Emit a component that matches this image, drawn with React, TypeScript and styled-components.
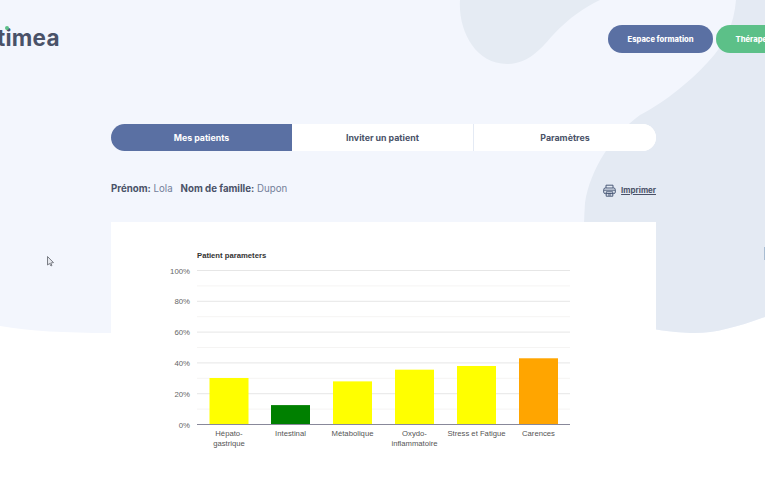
import React from "react";
import styled, { createGlobalStyle } from "styled-components";

const Global = createGlobalStyle`
  html, body { margin: 0; padding: 0; background: #fff; }
  #root { width: 765px; }
`;

const Page = styled.div`
  position: relative;
  width: 765px;
  height: 477px;
  overflow: hidden;
  font-family: Inter, "Liberation Sans", sans-serif;
  color: #4a5268;
`;

const Backdrop = styled.svg`
  position: absolute;
  inset: 0;
`;

const Content = styled.div`
  position: relative;
  display: flex;
  flex-direction: column;
`;

const Header = styled.header`
  display: flex;
  align-items: flex-start;
  justify-content: space-between;
  height: 124px;
  width: 765px;
`;

const Logo = styled.div`
  position: relative;
  margin: 24px 0 0 -3px;
  font-size: 22.5px;
  line-height: 27px;
  font-weight: 700;
  letter-spacing: 0.25px;
  color: #4a5268;
`;

const LogoDot = styled.span`
  position: absolute;
  left: 8px;
  top: 2px;
  width: 4px;
  height: 4px;
  border-radius: 50%;
  background: #5cc088;
`;

const Nav = styled.nav`
  display: flex;
  gap: 3px;
  margin: 25px 0 0 0;
  width: 157px;
  flex: none;
  overflow: hidden;
`;

const NavButton = styled.a<{ $bg: string }>`
  flex: none;
  height: 28px;
  padding: 0 19.5px;
  display: flex;
  align-items: center;
  justify-content: center;
  border-radius: 14px;
  background: ${(p) => p.$bg};
  color: #fff;
  font-size: 7.6px;
  font-weight: 800;
`;

const Tabs = styled.div`
  display: grid;
  grid-template-columns: 181px 181px 183px;
  width: 545px;
  height: 27px;
  margin-left: 111px;
  border-radius: 14px;
  overflow: hidden;
  background: #fff;
`;

const Tab = styled.div<{ $active?: boolean; $divider?: boolean }>`
  display: flex;
  align-items: center;
  justify-content: center;
  font-size: 8.8px;
  font-weight: 700;
  background: ${(p) => (p.$active ? "#5a70a3" : "#fff")};
  color: ${(p) => (p.$active ? "#fff" : "#4a5268")};
  border-left: ${(p) => (p.$divider ? "1px solid #e4eaf4" : "none")};
`;

const InfoRow = styled.div`
  display: flex;
  align-items: center;
  justify-content: space-between;
  width: 545px;
  height: 24px;
  margin: 25px 0 0 111px;
`;

const Identity = styled.div`
  display: flex;
  gap: 8px;
  font-size: 9.7px;
`;

const Field = styled.span`
  color: #73809a;
  font-weight: 400;
`;

const FieldLabel = styled.b`
  color: #4a5268;
  font-weight: 700;
`;

const PrintLink = styled.a`
  display: flex;
  align-items: center;
  gap: 5px;
  margin-top: 4px;
  font-size: 7.9px;
  font-weight: 700;
  color: #4a5268;
  text-decoration: underline;
`;

const Card = styled.section`
  width: 545px;
  height: 256px;
  margin: 22px 0 0 111px;
  background: #fff;
`;

const ChartSvg = styled.svg`
  display: block;
`;

const bars = [
  { c: 229, v: 30.2, color: "#ffff00", label: ["Hépato-", "gastrique"] },
  { c: 290.5, v: 12.6, color: "#008000", label: ["Intestinal"] },
  { c: 352.5, v: 28, color: "#ffff00", label: ["Métabolique"] },
  { c: 414.5, v: 35.6, color: "#ffff00", label: ["Oxydo-", "inflammatoire"] },
  { c: 476.5, v: 38, color: "#ffff00", label: ["Stress et Fatigue"] },
  { c: 538.5, v: 43, color: "#ffa500", label: ["Carences"] },
];

const Y0 = 202.5;
const PX = 1.54;
const OX = 111;

function Chart() {
  const font = '"Liberation Sans", Arial, sans-serif';
  return (
    <ChartSvg width={545} height={256} viewBox="0 0 545 256">
      <text x={197 - OX} y={36} fontFamily={font} fontSize={7.7} fontWeight={700} fill="#333">
        Patient parameters
      </text>
      {[10, 30, 50, 70, 90].map((t) => (
        <rect key={t} x={197 - OX} y={Y0 - t * PX - 0.5} width={373} height={1} fill="#f5f4f3" />
      ))}
      {[20, 40, 60, 80, 100].map((t) => (
        <rect key={t} x={197 - OX} y={Y0 - t * PX - 0.5} width={373} height={1} fill="#e6e6e6" />
      ))}
      {[0, 20, 40, 60, 80, 100].map((t) => (
        <text key={t} x={190 - OX} y={Y0 - t * PX + 3} textAnchor="end" fontFamily={font} fontSize={7.8} fill="#666">
          {t}%
        </text>
      ))}
      {bars.map((b) => (
        <rect key={b.c} x={b.c - 19.5 - OX} y={Y0 - b.v * PX} width={39} height={b.v * PX} fill={b.color} />
      ))}
      <rect x={197 - OX} y={Y0 - 0.5} width={373} height={1} fill="#88889a" />
      {bars.map((b) =>
        b.label.map((line, i) => (
          <text
            key={line}
            x={b.c - OX}
            y={214 + i * 10}
            textAnchor="middle"
            fontFamily={font}
            fontSize={7.7}
            fill="#555"
          >
            {line}
          </text>
        ))
      )}
    </ChartSvg>
  );
}

function PrinterIcon() {
  return (
    <svg width="13" height="13" viewBox="0 0 13 13" fill="none" stroke="#4a5a78" strokeWidth="1">
      <path d="M3 4V1.2h7V4" />
      <rect x="0.7" y="4" width="11.6" height="5.6" rx="1.6" />
      <path d="M1 6.2h11" />
      <path d="M3.2 7.8h6.6v4.4H3.2z" />
      <path d="M5 9.5h3M5 11h3" />
    </svg>
  );
}

export default function App() {
  return (
    <Page>
      <Global />
      <Backdrop width={765} height={477} viewBox="0 0 765 477">
        <path
          d="M0 0H765V317C735 328 712 334 690 333C650 331 625 322 590 320C400 310 250 333 110 333C65 333 30 331 0 326Z"
          fill="#f3f6fd"
        />
        <path
          d="M460 0C458 30 475 64 507 64C530 64 543 46 553 35C570 17 585 7 600 0Z"
          fill="#e5ebf3"
        />
        <path
          d="M736 0C734 25 725 44 708 62C688 84 660 105 640 115C612 135 590 170 585 203C582 250 584 290 590 320C625 322 650 331 690 333C712 334 735 328 765 317V0Z"
          fill="#e4eaf3"
        />
        <rect x="764" y="247" width="1" height="13" fill="#a9bdd2" />
        <path d="M47.5 256.5V265L49.5 263.5L51 266L52 265.4L50.7 263L53.5 262.6Z" fill="#e6e8ee" stroke="#6d7078" strokeWidth="0.9" />
      </Backdrop>
      <Content>
        <Header>
          <Logo>
            timea
            <LogoDot />
          </Logo>
          <Nav>
            <NavButton $bg="#5a70a3">Espace formation</NavButton>
            <NavButton $bg="#5cc088">Thérapeutes</NavButton>
          </Nav>
        </Header>
        <Tabs>
          <Tab $active>Mes patients</Tab>
          <Tab>Inviter un patient</Tab>
          <Tab $divider>Paramètres</Tab>
        </Tabs>
        <InfoRow>
          <Identity>
            <Field>
              <FieldLabel>Prénom:</FieldLabel> Lola
            </Field>
            <Field>
              <FieldLabel>Nom de famille:</FieldLabel> Dupon
            </Field>
          </Identity>
          <PrintLink>
            <PrinterIcon />
            Imprimer
          </PrintLink>
        </InfoRow>
        <Card>
          <Chart />
        </Card>
      </Content>
    </Page>
  );
}
